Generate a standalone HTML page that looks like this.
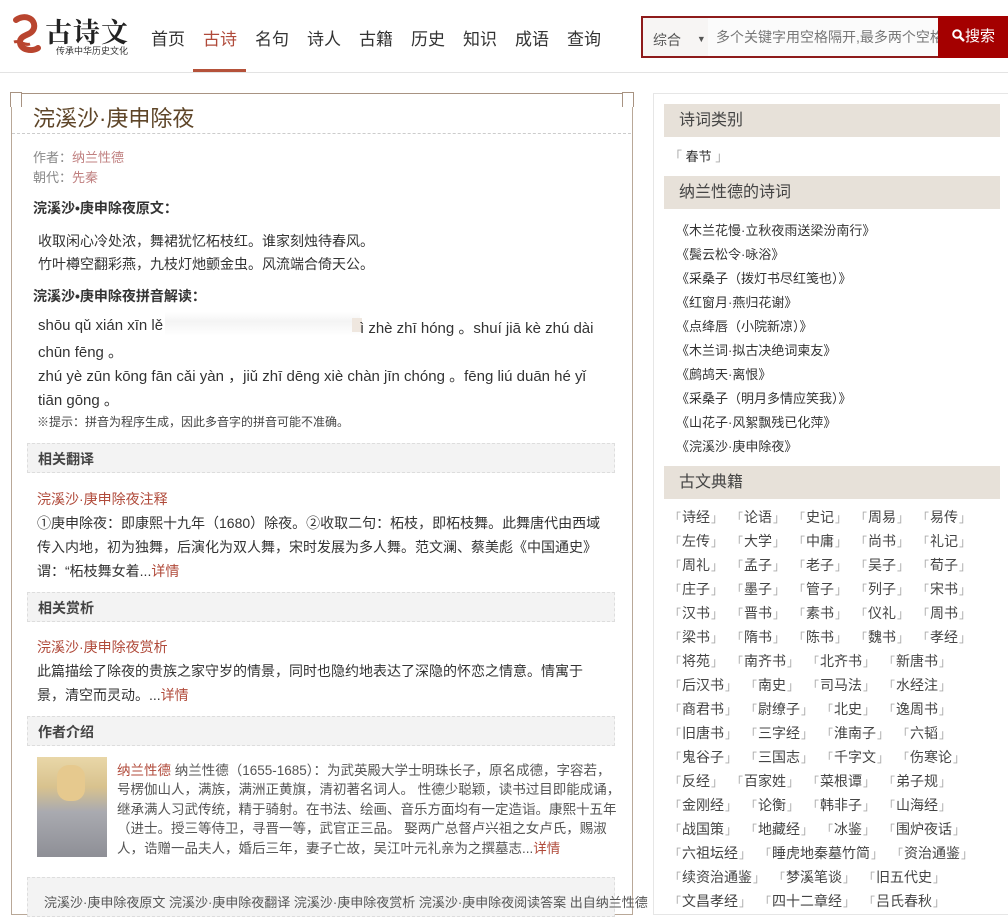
<!DOCTYPE html>
<html><head><meta charset="utf-8">
<style>
body{margin:0;width:1008px;height:904px;overflow:hidden;background:#fff;font-family:"Liberation Sans","Noto Sans CJK SC",sans-serif;color:#333;position:relative}
.a{position:absolute;white-space:nowrap}
.nav{font-size:17px;color:#333;top:25px}
.lk,.a.lk,.a .lk{color:#b04a3a}
.meta{font-size:13px;color:#888;left:33px}
.meta span{color:#c08080}
.h{font-size:14px;font-weight:bold;color:#333;left:33px}
.p{font-size:14px;color:#333;left:38px}
.py{font-size:15px;color:#333;left:38px}
.t{font-size:14px;color:#333;left:37px}
.au{font-size:13.5px;color:#555;left:117px}
.sec{position:absolute;left:27px;width:588px;height:30px;background:#f3f3f3;border:1px dashed #ddd;font-size:14px;font-weight:bold;color:#444;line-height:30px;padding-left:10px;box-sizing:border-box}
.rh{position:absolute;left:664px;width:336px;height:33px;background:#e7e1d9;font-size:16px;color:#444;line-height:33px;padding-left:15px;box-sizing:border-box}
.pl{font-size:13px;color:#333;left:676px}
.bk{position:absolute;left:668px;font-size:14px;color:#444;white-space:nowrap}
.bk i{font-style:normal;color:#aaa;display:inline-block;width:14px;text-align:center;font-size:12px}
.bk b{font-weight:normal;display:inline-block;margin-right:6px}
</style></head><body>
<div class="a" style="left:10px;top:14px;width:34px;height:42px">
<svg width="34" height="42" viewBox="0 0 34 42"><path d="M6 6c8-6 20-2 18 8-2 8-14 6-14 14 0 8 12 10 18 6" fill="none" stroke="#b9452f" stroke-width="6" stroke-linecap="round"/><path d="M4 28c6-2 10 4 16 2" fill="none" stroke="#b9452f" stroke-width="3"/></svg></div>
<div class="a" style="left:45px;top:11px;font-size:27px;font-weight:bold;color:#222;font-family:'Noto Serif CJK SC',serif;letter-spacing:1px">古诗文</div>
<div class="a" style="left:56px;top:44px;font-size:9px;color:#333">传承中华历史文化</div>
<div class="a nav" style="left:151px">首页</div>
<div class="a nav lk" style="left:203px">古诗</div>
<div class="a nav" style="left:255px">名句</div>
<div class="a nav" style="left:307px">诗人</div>
<div class="a nav" style="left:359px">古籍</div>
<div class="a nav" style="left:411px">历史</div>
<div class="a nav" style="left:463px">知识</div>
<div class="a nav" style="left:515px">成语</div>
<div class="a nav" style="left:567px">查询</div>
<div class="a" style="left:193px;top:69px;width:53px;height:3px;background:#b5523a"></div>
<div class="a" style="left:0;top:72px;width:1008px;height:1px;background:#e3e3e3"></div>
<div class="a" style="left:641px;top:16px;width:367px;height:42px;background:#8e1b1b"></div>
<div class="a" style="left:643px;top:18px;width:65px;height:38px;background:#f7f5f4;font-size:14px;color:#555;line-height:42px;padding-left:10px;box-sizing:border-box">综合 <span style="font-size:9px;margin-left:12px;vertical-align:3px">▼</span></div>
<div class="a" style="left:708px;top:18px;width:230px;height:38px;background:#fbfbfb;font-size:14px;color:#777;line-height:38px;padding-left:8px;box-sizing:border-box;overflow:hidden">多个关键字用空格隔开,最多两个空格</div>
<div class="a" style="left:938px;top:16px;width:70px;height:42px;background:#a40000;color:#fff;font-size:15px;line-height:42px;padding-left:14px;box-sizing:border-box">
<svg width="13" height="13" viewBox="0 0 13 13" style="vertical-align:-1px"><circle cx="5" cy="5" r="3.8" fill="none" stroke="#fff" stroke-width="2"/><path d="M8 8l4 4" stroke="#fff" stroke-width="2.5"/></svg>搜索</div>
<div class="a" style="left:11px;top:93px;width:620px;height:820px;border:1px solid #b9a898;border-top-color:#a89382"></div>
<div class="a" style="left:10px;top:92px;width:10px;height:14px;background:#fff;border:1px solid #a89382;border-width:1px 1px 0 1px"></div>
<div class="a" style="left:622px;top:92px;width:10px;height:14px;background:#fff;border:1px solid #a89382;border-width:1px 1px 0 1px"></div>
<div class="a" style="left:33px;top:101px;font-size:22px;color:#5e4528">浣溪沙·庚申除夜</div>
<div class="a" style="left:12px;top:133px;width:619px;border-top:1px dashed #ccc"></div>
<div class="a meta" style="top:147px">作者：<span>纳兰性德</span></div>
<div class="a meta" style="top:167px">朝代：<span>先秦</span></div>
<div class="a h" style="top:198px">浣溪沙•庚申除夜原文：</div>
<div class="a p" style="top:231px">收取闲心冷处浓，舞裙犹忆柘枝红。谁家刻烛待春风。</div>
<div class="a p" style="top:254px">竹叶樽空翻彩燕，九枝灯灺颤金虫。风流端合倚天公。</div>
<div class="a h" style="top:286px">浣溪沙•庚申除夜拼音解读：</div>
<div class="a py" style="top:317px">shōu qǔ xián xīn lě</div>
<div class="a" style="left:165px;top:312px;width:195px;height:24px;background:linear-gradient(180deg,#fff,#f4f4f4 40%,#fff);"></div>
<div class="a" style="left:352px;top:318px;width:10px;height:14px;background:#efe7df"></div>
<div class="a py" style="left:360px;top:317px">ì zhè zhī hóng 。shuí jiā kè zhú dài</div>
<div class="a py" style="top:341px">chūn fēng 。</div>
<div class="a py" style="top:365px">zhú yè zūn kōng fān cǎi yàn ，jiǔ zhī dēng xiè chàn jīn chóng 。fēng liú duān hé yǐ</div>
<div class="a py" style="top:389px">tiān gōng 。</div>
<div class="a" style="left:37px;top:413px;font-size:12px;color:#444">※提示：拼音为程序生成，因此多音字的拼音可能不准确。</div>
<div class="sec" style="top:443px">相关翻译</div>
<div class="a t lk" style="top:489px">浣溪沙·庚申除夜注释</div>
<div class="a t" style="top:513px">①庚申除夜：即康熙十九年（1680）除夜。②收取二句：柘枝，即柘枝舞。此舞唐代由西域</div>
<div class="a t" style="top:537px">传入内地，初为独舞，后演化为双人舞，宋时发展为多人舞。范文澜、蔡美彪《中国通史》</div>
<div class="a t" style="top:561px">谓：“柘枝舞女着...<span class="lk">详情</span></div>
<div class="sec" style="top:592px">相关赏析</div>
<div class="a t lk" style="top:637px">浣溪沙·庚申除夜赏析</div>
<div class="a t" style="top:661px">此篇描绘了除夜的贵族之家守岁的情景，同时也隐约地表达了深隐的怀恋之情意。情寓于</div>
<div class="a t" style="top:685px">景，清空而灵动。...<span class="lk">详情</span></div>
<div class="sec" style="top:716px">作者介绍</div>
<div class="a" style="left:37px;top:757px;width:70px;height:100px;background:linear-gradient(180deg,#e9d7a8 0%,#d8c28e 30%,#a9aab0 55%,#8e8f96 100%)">
<div style="position:absolute;left:20px;top:8px;width:28px;height:36px;border-radius:12px;background:#e6c98e"></div></div>
<div class="a au" style="top:759px"><span class="lk">纳兰性德</span> 纳兰性德（1655-1685）：为武英殿大学士明珠长子，原名成德，字容若，</div>
<div class="a au" style="top:778px">号楞伽山人，满族，满洲正黄旗，清初著名词人。 性德少聪颖，读书过目即能成诵，</div>
<div class="a au" style="top:798px">继承满人习武传统，精于骑射。在书法、绘画、音乐方面均有一定造诣。康熙十五年</div>
<div class="a au" style="top:817px">（进士。授三等侍卫，寻晋一等，武官正三品。 娶两广总督卢兴祖之女卢氏，赐淑</div>
<div class="a au" style="top:837px">人，诰赠一品夫人，婚后三年，妻子亡故，吴江叶元礼亲为之撰墓志...<span class="lk">详情</span></div>
<div class="a" style="left:27px;top:877px;width:588px;height:40px;background:#f3f3f3;border:1px dashed #ddd;box-sizing:border-box"></div>
<div class="a" style="left:44px;top:892px;font-size:13px;color:#555">浣溪沙·庚申除夜原文 浣溪沙·庚申除夜翻译 浣溪沙·庚申除夜赏析 浣溪沙·庚申除夜阅读答案 出自纳兰性德</div>
<div class="a" style="left:653px;top:93px;width:360px;height:820px;border:1px solid #e6e6e6"></div>
<div class="rh" style="top:104px">诗词类别</div>
<div class="a" style="left:669px;top:146px;font-size:13px;color:#333"><span style="color:#aaa">「</span> 春节 <span style="color:#aaa">」</span></div>
<div class="rh" style="top:176px">纳兰性德的诗词</div>
<div class="a pl" style="top:220px">《木兰花慢·立秋夜雨送梁汾南行》</div>
<div class="a pl" style="top:244px">《鬓云松令·咏浴》</div>
<div class="a pl" style="top:268px">《采桑子（拨灯书尽红笺也）》</div>
<div class="a pl" style="top:292px">《红窗月·燕归花谢》</div>
<div class="a pl" style="top:316px">《点绛唇（小院新凉）》</div>
<div class="a pl" style="top:340px">《木兰词·拟古决绝词柬友》</div>
<div class="a pl" style="top:364px">《鹧鸪天·离恨》</div>
<div class="a pl" style="top:388px">《采桑子（明月多情应笑我）》</div>
<div class="a pl" style="top:412px">《山花子·风絮飘残已化萍》</div>
<div class="a pl" style="top:436px">《浣溪沙·庚申除夜》</div>
<div class="rh" style="top:466px">古文典籍</div>
<div class="bk" style="top:507px"><i>「</i><b>诗经<i>」</i></b><i>「</i><b>论语<i>」</i></b><i>「</i><b>史记<i>」</i></b><i>「</i><b>周易<i>」</i></b><i>「</i><b>易传<i>」</i></b></div>
<div class="bk" style="top:531px"><i>「</i><b>左传<i>」</i></b><i>「</i><b>大学<i>」</i></b><i>「</i><b>中庸<i>」</i></b><i>「</i><b>尚书<i>」</i></b><i>「</i><b>礼记<i>」</i></b></div>
<div class="bk" style="top:555px"><i>「</i><b>周礼<i>」</i></b><i>「</i><b>孟子<i>」</i></b><i>「</i><b>老子<i>」</i></b><i>「</i><b>吴子<i>」</i></b><i>「</i><b>荀子<i>」</i></b></div>
<div class="bk" style="top:579px"><i>「</i><b>庄子<i>」</i></b><i>「</i><b>墨子<i>」</i></b><i>「</i><b>管子<i>」</i></b><i>「</i><b>列子<i>」</i></b><i>「</i><b>宋书<i>」</i></b></div>
<div class="bk" style="top:603px"><i>「</i><b>汉书<i>」</i></b><i>「</i><b>晋书<i>」</i></b><i>「</i><b>素书<i>」</i></b><i>「</i><b>仪礼<i>」</i></b><i>「</i><b>周书<i>」</i></b></div>
<div class="bk" style="top:627px"><i>「</i><b>梁书<i>」</i></b><i>「</i><b>隋书<i>」</i></b><i>「</i><b>陈书<i>」</i></b><i>「</i><b>魏书<i>」</i></b><i>「</i><b>孝经<i>」</i></b></div>
<div class="bk" style="top:651px"><i>「</i><b>将苑<i>」</i></b><i>「</i><b>南齐书<i>」</i></b><i>「</i><b>北齐书<i>」</i></b><i>「</i><b>新唐书<i>」</i></b></div>
<div class="bk" style="top:675px"><i>「</i><b>后汉书<i>」</i></b><i>「</i><b>南史<i>」</i></b><i>「</i><b>司马法<i>」</i></b><i>「</i><b>水经注<i>」</i></b></div>
<div class="bk" style="top:699px"><i>「</i><b>商君书<i>」</i></b><i>「</i><b>尉缭子<i>」</i></b><i>「</i><b>北史<i>」</i></b><i>「</i><b>逸周书<i>」</i></b></div>
<div class="bk" style="top:723px"><i>「</i><b>旧唐书<i>」</i></b><i>「</i><b>三字经<i>」</i></b><i>「</i><b>淮南子<i>」</i></b><i>「</i><b>六韬<i>」</i></b></div>
<div class="bk" style="top:747px"><i>「</i><b>鬼谷子<i>」</i></b><i>「</i><b>三国志<i>」</i></b><i>「</i><b>千字文<i>」</i></b><i>「</i><b>伤寒论<i>」</i></b></div>
<div class="bk" style="top:771px"><i>「</i><b>反经<i>」</i></b><i>「</i><b>百家姓<i>」</i></b><i>「</i><b>菜根谭<i>」</i></b><i>「</i><b>弟子规<i>」</i></b></div>
<div class="bk" style="top:795px"><i>「</i><b>金刚经<i>」</i></b><i>「</i><b>论衡<i>」</i></b><i>「</i><b>韩非子<i>」</i></b><i>「</i><b>山海经<i>」</i></b></div>
<div class="bk" style="top:819px"><i>「</i><b>战国策<i>」</i></b><i>「</i><b>地藏经<i>」</i></b><i>「</i><b>冰鉴<i>」</i></b><i>「</i><b>围炉夜话<i>」</i></b></div>
<div class="bk" style="top:843px"><i>「</i><b>六祖坛经<i>」</i></b><i>「</i><b>睡虎地秦墓竹简<i>」</i></b><i>「</i><b>资治通鉴<i>」</i></b></div>
<div class="bk" style="top:867px"><i>「</i><b>续资治通鉴<i>」</i></b><i>「</i><b>梦溪笔谈<i>」</i></b><i>「</i><b>旧五代史<i>」</i></b></div>
<div class="bk" style="top:891px"><i>「</i><b>文昌孝经<i>」</i></b><i>「</i><b>四十二章经<i>」</i></b><i>「</i><b>吕氏春秋<i>」</i></b></div>
</body></html>
